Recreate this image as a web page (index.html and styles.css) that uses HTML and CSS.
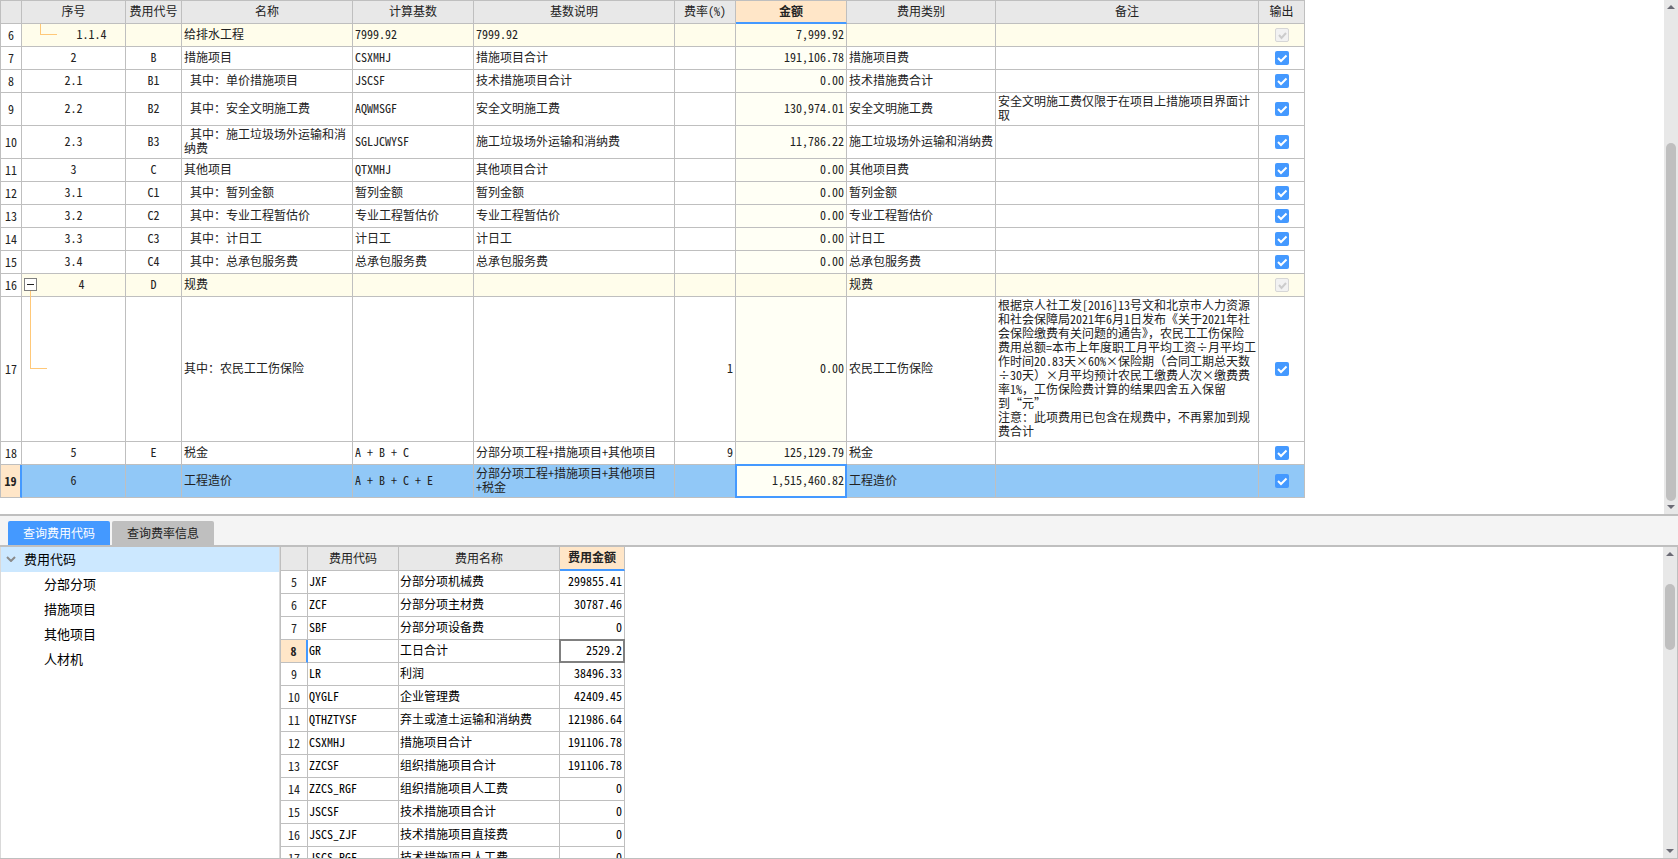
FILE: index.html
```html
<!DOCTYPE html>
<html lang="zh-CN">
<head>
<meta charset="utf-8">
<title>费用汇总</title>
<link rel="stylesheet" href="styles.css">
</head>
<body>
<main class="app">
<section class="pane pane-top">
<div class="grid-area">
<table class="grid grid-main">
<colgroup><col class="c-no"><col class="c-seq"><col class="c-code"><col class="c-name"><col class="c-base"><col class="c-desc"><col class="c-rate"><col class="c-amt"><col class="c-type"><col class="c-note"><col class="c-out"></colgroup>
<thead>
<tr><th></th><th>序号</th><th>费用代号</th><th>名称</th><th>计算基数</th><th>基数说明</th><th>费率(%)</th><th class="active">金额</th><th>费用类别</th><th>备注</th><th>输出</th></tr>
</thead>
<tbody>
<tr class="group"><th>6</th><td class="mid level-2"><span class="branch branch-2"></span>1.1.4</td><td class="mid"></td><td>给排水工程</td><td>7999.92</td><td>7999.92</td><td class="num"></td><td class="num amt">7,999.92</td><td></td><td></td><td class="mid"><input type="checkbox" aria-label="输出" checked disabled></td></tr>
<tr><th>7</th><td class="mid">2</td><td class="mid">B</td><td>措施项目</td><td>CSXMHJ</td><td>措施项目合计</td><td class="num"></td><td class="num amt">191,106.78</td><td>措施项目费</td><td></td><td class="mid"><input type="checkbox" aria-label="输出" checked></td></tr>
<tr><th>8</th><td class="mid">2.1</td><td class="mid">B1</td><td class="sub">其中：单价措施项目</td><td>JSCSF</td><td>技术措施项目合计</td><td class="num"></td><td class="num amt">0.00</td><td>技术措施费合计</td><td></td><td class="mid"><input type="checkbox" aria-label="输出" checked></td></tr>
<tr><th>9</th><td class="mid">2.2</td><td class="mid">B2</td><td class="sub">其中：安全文明施工费</td><td>AQWMSGF</td><td>安全文明施工费</td><td class="num"></td><td class="num amt">130,974.01</td><td>安全文明施工费</td><td>安全文明施工费仅限于在项目上措施项目界面计<br>取</td><td class="mid"><input type="checkbox" aria-label="输出" checked></td></tr>
<tr><th>10</th><td class="mid">2.3</td><td class="mid">B3</td><td class="sub">其中：施工垃圾场外运输和消<br>纳费</td><td>SGLJCWYSF</td><td>施工垃圾场外运输和消纳费</td><td class="num"></td><td class="num amt">11,786.22</td><td>施工垃圾场外运输和消纳费</td><td></td><td class="mid"><input type="checkbox" aria-label="输出" checked></td></tr>
<tr><th>11</th><td class="mid">3</td><td class="mid">C</td><td>其他项目</td><td>QTXMHJ</td><td>其他项目合计</td><td class="num"></td><td class="num amt">0.00</td><td>其他项目费</td><td></td><td class="mid"><input type="checkbox" aria-label="输出" checked></td></tr>
<tr><th>12</th><td class="mid">3.1</td><td class="mid">C1</td><td class="sub">其中：暂列金额</td><td>暂列金额</td><td>暂列金额</td><td class="num"></td><td class="num amt">0.00</td><td>暂列金额</td><td></td><td class="mid"><input type="checkbox" aria-label="输出" checked></td></tr>
<tr><th>13</th><td class="mid">3.2</td><td class="mid">C2</td><td class="sub">其中：专业工程暂估价</td><td>专业工程暂估价</td><td>专业工程暂估价</td><td class="num"></td><td class="num amt">0.00</td><td>专业工程暂估价</td><td></td><td class="mid"><input type="checkbox" aria-label="输出" checked></td></tr>
<tr><th>14</th><td class="mid">3.3</td><td class="mid">C3</td><td class="sub">其中：计日工</td><td>计日工</td><td>计日工</td><td class="num"></td><td class="num amt">0.00</td><td>计日工</td><td></td><td class="mid"><input type="checkbox" aria-label="输出" checked></td></tr>
<tr><th>15</th><td class="mid">3.4</td><td class="mid">C4</td><td class="sub">其中：总承包服务费</td><td>总承包服务费</td><td>总承包服务费</td><td class="num"></td><td class="num amt">0.00</td><td>总承包服务费</td><td></td><td class="mid"><input type="checkbox" aria-label="输出" checked></td></tr>
<tr class="group"><th>16</th><td class="mid level-1"><button class="toggle" type="button" aria-label="折叠"></button>4</td><td class="mid">D</td><td>规费</td><td></td><td></td><td class="num"></td><td class="num amt"></td><td>规费</td><td></td><td class="mid"><input type="checkbox" aria-label="输出" checked disabled></td></tr>
<tr><th>17</th><td class="mid level-1"><span class="branch branch-1"></span></td><td class="mid"></td><td>其中：农民工工伤保险</td><td></td><td></td><td class="num">1</td><td class="num amt">0.00</td><td>农民工工伤保险</td><td>根据京人社工发[2016]13号文和北京市人力资源<br>和社会保障局2021年6月1日发布《关于2021年社<br>会保险缴费有关问题的通告》，农民工工伤保险<br>费用总额=本市上年度职工月平均工资÷月平均工<br>作时间20.83天×60%×保险期（合同工期总天数<br>÷30天）×月平均预计农民工缴费人次×缴费费<br>率1%，工伤保险费计算的结果四舍五入保留<br>到“元”<br>注意：此项费用已包含在规费中，不再累加到规<br>费合计</td><td class="mid"><input type="checkbox" aria-label="输出" checked></td></tr>
<tr><th>18</th><td class="mid">5</td><td class="mid">E</td><td>税金</td><td>A + B + C</td><td>分部分项工程+措施项目+其他项目</td><td class="num">9</td><td class="num amt">125,129.79</td><td>税金</td><td></td><td class="mid"><input type="checkbox" aria-label="输出" checked></td></tr>
<tr class="selected"><th class="active">19</th><td class="mid">6</td><td class="mid"></td><td>工程造价</td><td>A + B + C + E</td><td>分部分项工程+措施项目+其他项目<br>+税金</td><td class="num"></td><td class="num amt focus">1,515,460.82</td><td>工程造价</td><td></td><td class="mid"><input type="checkbox" aria-label="输出" checked></td></tr>
</tbody>
</table>
</div>
<div class="scroll scroll-top"><span class="arrow up"></span><div class="track"><div class="before"></div><div class="thumb"></div><div class="after"></div></div><span class="arrow down"></span></div>
</section>
<nav class="tabs" role="tablist">
<button class="tab current" type="button" role="tab" aria-selected="true">查询费用代码</button>
<button class="tab" type="button" role="tab" aria-selected="false">查询费率信息</button>
</nav>
<section class="pane pane-bottom">
<ul class="tree">
<li class="node root"><svg class="chevron" viewBox="0 0 10 6" aria-hidden="true"><path d="M1 1l4 4 4-4"/></svg>费用代码</li>
<li class="node">分部分项</li>
<li class="node">措施项目</li>
<li class="node">其他项目</li>
<li class="node">人材机</li>
</ul>
<div class="grid-area">
<table class="grid grid-codes">
<colgroup><col class="d-no"><col class="d-code"><col class="d-name"><col class="d-amt"></colgroup>
<thead><tr><th></th><th>费用代码</th><th>费用名称</th><th class="active">费用金额</th></tr></thead>
<tbody>
<tr><th>5</th><td>JXF</td><td>分部分项机械费</td><td class="num">299855.41</td></tr>
<tr><th>6</th><td>ZCF</td><td>分部分项主材费</td><td class="num">30787.46</td></tr>
<tr><th>7</th><td>SBF</td><td>分部分项设备费</td><td class="num">0</td></tr>
<tr><th class="active">8</th><td>GR</td><td>工日合计</td><td class="num focus">2529.2</td></tr>
<tr><th>9</th><td>LR</td><td>利润</td><td class="num">38496.33</td></tr>
<tr><th>10</th><td>QYGLF</td><td>企业管理费</td><td class="num">42409.45</td></tr>
<tr><th>11</th><td>QTHZTYSF</td><td>弃土或渣土运输和消纳费</td><td class="num">121986.64</td></tr>
<tr><th>12</th><td>CSXMHJ</td><td>措施项目合计</td><td class="num">191106.78</td></tr>
<tr><th>13</th><td>ZZCSF</td><td>组织措施项目合计</td><td class="num">191106.78</td></tr>
<tr><th>14</th><td>ZZCS_RGF</td><td>组织措施项目人工费</td><td class="num">0</td></tr>
<tr><th>15</th><td>JSCSF</td><td>技术措施项目合计</td><td class="num">0</td></tr>
<tr><th>16</th><td>JSCS_ZJF</td><td>技术措施项目直接费</td><td class="num">0</td></tr>
<tr><th>17</th><td>JSCS_RGF</td><td>技术措施项目人工费</td><td class="num">0</td></tr>
</tbody>
</table>
</div>
<div class="scroll scroll-bottom"><span class="arrow up"></span><div class="track"><div class="before"></div><div class="thumb"></div><div class="after"></div></div><span class="arrow down"></span></div>
</section>
</main>
</body>
</html>
```
FILE: styles.css
```css
:root {
  --line: #bfbfbf;
  --blue: #4499ff;
  --peach: #ffe6c8;
  --branch: #ffc878;
}

* { box-sizing: border-box; }

body {
  margin: 0;
  background: #fff;
  color: #222;
  font: 12px/14px "Noto Sans Mono CJK SC", "Noto Sans CJK SC", sans-serif;
}

.app {
  display: flex;
  flex-direction: column;
  height: 100vh;
  overflow: hidden;
}

.pane { display: flex; }
.pane-top { flex: none; }
.pane-top .grid-area { padding-bottom: 16px; }
.pane-bottom {
  flex: 1;
  min-height: 0;
  border: solid var(--line);
  border-width: 1px 1px 1px 0;
}
.grid-area { flex: 1; min-width: 0; overflow: hidden; }

/* Data grids */
.grid {
  table-layout: fixed;
  border-collapse: separate;
  border-spacing: 0;
  border-left: 1px solid var(--line);
}
.grid-main { width: 1305px; border-top: 1px solid var(--line); }
.grid-codes { width: 345px; color: #000; }

.c-no { width: 21px; }
.c-seq { width: 104px; }
.c-code { width: 56px; }
.c-name { width: 171px; }
.c-base { width: 121px; }
.c-desc { width: 201px; }
.c-rate { width: 61px; }
.c-amt { width: 111px; }
.c-type { width: 149px; }
.c-note { width: 263px; }
.c-out { width: 46px; }
.d-no { width: 27px; }
.d-code { width: 91px; }
.d-name { width: 161px; }
.d-amt { width: 65px; }

.grid th,
.grid td {
  position: relative;
  height: 23px;
  padding: 1px 2px 3px;
  border: solid var(--line);
  border-width: 0 1px 1px 0;
  text-align: left;
  font-weight: 400;
  white-space: nowrap;
}
.grid th { padding: 2px 0; text-align: center; color: #222; }
.grid thead th { padding: 1px 0 3px; background: #e8e8e8; }
.grid-codes thead th { height: 24px; }
.grid-codes td { padding-left: 1px; }
.grid .mid { text-align: center; }
.grid .mid:last-child { padding: 2px; }
.grid .num { text-align: right; }
.grid .sub { text-indent: 6px; }
.grid .level-1 { padding-left: 18px; }
.grid .level-2 { padding-left: 38px; }

.grid .group td { background: #fffdeb; }
.grid .amt { background: #fffff5; }
.grid .selected td { background: #91c8f7; }
.grid .selected .focus { background: #fffff5; }

.grid th.active { background: var(--peach); font-weight: 700; }
.grid thead th.active { border-bottom: 2px solid var(--blue); }
.grid tbody th.active { border-right: 2px solid var(--blue); }

.focus::after {
  content: "";
  position: absolute;
  inset: -1px;
  border: 2px solid var(--blue);
}
.grid-codes .focus::after { border-color: #808080; }

/* Hierarchy lines and toggle over the number column */
.branch {
  position: absolute;
  top: 0;
  bottom: 50%;
  width: 17px;
  border: solid var(--branch);
  border-width: 0 0 1px 1px;
}
.branch-1 { left: 8px; top: -6px; }
.branch-2 { left: 18px; }
.toggle {
  position: absolute;
  left: 2px;
  top: 4px;
  width: 13px;
  height: 13px;
  padding: 0;
  border: 1px solid #808080;
  background: linear-gradient(#222, #222) center / 7px 1px no-repeat #fff;
}

input[type="checkbox"] {
  appearance: none;
  display: block;
  width: 14px;
  height: 14px;
  margin: 0 auto;
  border-radius: 2px;
  background: var(--blue) url("data:image/svg+xml,%3Csvg xmlns='http://www.w3.org/2000/svg' viewBox='0 0 14 14'%3E%3Cpath d='M3 7l3 3 5.500-5.500' fill='none' stroke='white' stroke-width='2'/%3E%3C/svg%3E");
}
input[type="checkbox"]:disabled {
  border: 1px solid #d6d6d6;
  background: #f2f2f2 url("data:image/svg+xml,%3Csvg xmlns='http://www.w3.org/2000/svg' viewBox='1 1 12 12'%3E%3Cpath d='M4 7l2.500 3 4.500-5' fill='none' stroke='%23ccc' stroke-width='2'/%3E%3C/svg%3E");
}

/* Tabs */
.tabs {
  display: flex;
  flex: none;
  gap: 2px;
  height: 32px;
  padding: 5px 8px 0;
  border-top: 2px solid var(--line);
  border-bottom: 1px solid var(--line);
  background: #f4f4f4;
}
.tab {
  width: 102px;
  padding: 0;
  border: 0;
  border-radius: 2px 2px 0 0;
  background: var(--line);
  color: #222;
  font: 12px/24px "Noto Sans CJK SC", sans-serif;
}
.tab.current { background: var(--blue); color: #fff; }

/* Tree */
.tree {
  flex: none;
  width: 280px;
  margin: 0;
  padding: 0;
  border: solid #d9d9d9;
  border-width: 0 1px;
  list-style: none;
  color: #000;
  font: 13px/23px "Noto Sans CJK SC", sans-serif;
}
.node { height: 25px; padding: 0 0 2px 43px; }
.root {
  display: flex;
  align-items: center;
  gap: 8px;
  padding-left: 5px;
  background: #cce8ff;
}
.chevron { width: 10px; height: 6px; fill: none; stroke: #8a8a8a; stroke-width: 2; }

/* Scroll bars */
.scroll {
  display: flex;
  flex: none;
  flex-direction: column;
  align-items: center;
  width: 14px;
  padding: 5px 0;
  background: #e8e8e8;
}
.arrow { border: 4px solid transparent; }
.arrow.up { border-top: 0; border-bottom-color: #6b6b75; }
.arrow.down { border-bottom: 0; border-top-color: #6b6b75; }
.track { display: flex; flex: 1; flex-direction: column; width: 10px; padding: 4px 0; }
.thumb { border-radius: 5px; background: var(--line); }
.scroll-top .before { flex: 130; }
.scroll-top .thumb { flex: 358; }
.scroll-bottom .before { flex: 24; }
.scroll-bottom .thumb { flex: 66; }
.scroll-bottom .after { flex: 196; }
```
